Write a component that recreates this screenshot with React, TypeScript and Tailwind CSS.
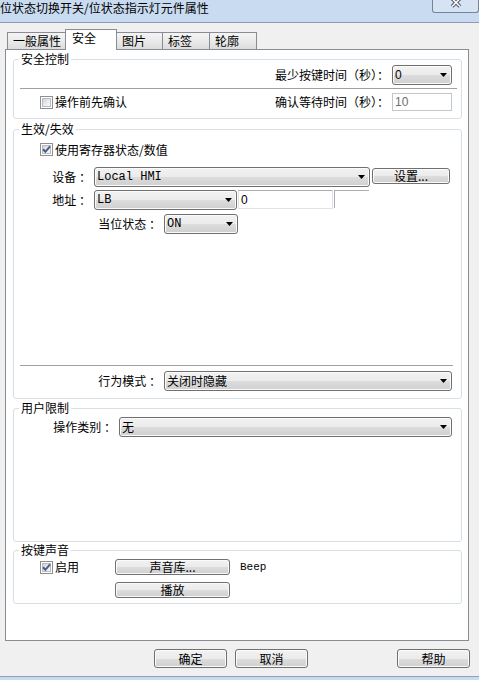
import React from "react";

const cjk = "[font-family:'Noto_Sans_CJK_SC','Noto_Sans',sans-serif]";
const mono = "[font-family:'Liberation_Mono',monospace]";
const sans = "[font-family:'Liberation_Sans',sans-serif]";
const btnBg =
  "[background-image:linear-gradient(180deg,#f2f2f2_0%,#ebebeb_50%,#dddddd_50%,#cfcfcf_100%)]";
const tabBg =
  "[background-image:linear-gradient(180deg,#f4f4f4_0%,#eaeaea_50%,#dcdcdc_100%)]";

function Btn({ children, className = "" }: { children: React.ReactNode; className?: string }) {
  return (
    <div
      className={`flex shrink-0 items-center justify-center rounded-[3px] border border-[#707070] ${btnBg} shadow-[inset_0_0_0_1px_#fbfbfb] leading-[14px] ${className}`}
    >
      {children}
    </div>
  );
}

function Combo({
  text,
  className = "",
  font = "",
}: {
  text: string;
  className?: string;
  font?: string;
}) {
  return (
    <div
      className={`flex h-[20px] shrink-0 items-center rounded-[3px] border border-[#707070] ${btnBg} shadow-[inset_0_0_0_1px_#fbfbfb] pl-[2px] pr-[4px] ${className}`}
    >
      <span className={`leading-[14px] ${font}`}>{text}</span>
      <svg className="ml-auto" width="7" height="4" viewBox="0 0 7 4">
        <path d="M0 0H7L3.5 4Z" fill="#000" />
      </svg>
    </div>
  );
}

function Check({ checked = false, className = "" }: { checked?: boolean; className?: string }) {
  return (
    <div
      className={`relative h-[13px] w-[13px] shrink-0 border border-[#8e8f8f] bg-white p-[1px] ${className}`}
    >
      <div className="h-full w-full border border-[#b9bcc0] [background-image:linear-gradient(135deg,#cfd2d6_0%,#eceef0_60%,#f7f7f7_100%)]" />
      {checked && (
        <svg className="absolute left-[-1px] top-[-1px]" width="13" height="13" viewBox="0 0 13 13">
          <path d="M3 6.3L5.4 8.8L10 3.4" fill="none" stroke="#4a5d8e" strokeWidth="2" />
        </svg>
      )}
    </div>
  );
}

function Tab({ children, className = "" }: { children: React.ReactNode; className?: string }) {
  return (
    <div
      className={`h-[17px] shrink-0 border border-b-0 border-[#898c95] ${tabBg} pl-[5px] leading-[16px] ${className}`}
    >
      {children}
    </div>
  );
}

export default function App() {
  return (
    <div
      className={`flex h-[680px] w-[479px] flex-col overflow-hidden bg-[#f0f0f0] text-[12px] leading-[16px] text-black ${cjk}`}
    >
      {/* title bar */}
      <div className="flex h-[23px] shrink-0 items-start border-b border-[#8c9db3] bg-[#c9dbf0]">
        <div className="leading-[15px]">位状态切换开关/位状态指示灯元件属性</div>
        <div className="ml-auto flex h-[13px] w-[47px] items-start justify-center overflow-hidden rounded-b-[3px] border border-t-0 border-[#74849b] bg-[#d6e3f3]">
          <svg className="-mt-[3px]" width="12" height="11" viewBox="0 0 12 11">
            <path d="M2 1.5L10 9.5M10 1.5L2 9.5" stroke="#4b5568" strokeWidth="3.6" />
            <path d="M2 1.5L10 9.5M10 1.5L2 9.5" stroke="#ffffff" strokeWidth="1.6" />
          </svg>
        </div>
      </div>

      {/* tabs */}
      <div className="mt-[6px] flex h-[20px] shrink-0 items-end pl-[7px]">
        <Tab className="w-[59px]">一般属性</Tab>
        <div className="relative z-10 -mb-[1px] -ml-[1px] h-[21px] w-[52px] shrink-0 border border-b-0 border-[#898c95] bg-white pl-[6px] leading-[16px]">
          安全
        </div>
        <Tab className="-ml-[1px] w-[47px]">图片</Tab>
        <Tab className="-ml-[1px] w-[48px]">标签</Tab>
        <Tab className="-ml-[1px] w-[48px]">轮廓</Tab>
      </div>

      {/* page */}
      <div className="ml-[5px] h-[592px] w-[464px] shrink-0 border border-[#898c95] bg-white">
        {/* 安全控制 */}
        <fieldset className="ml-[7px] mt-[3px] w-[449px] rounded-[3px] border border-[#d5dfe5] pb-[7px]">
          <legend className="ml-[5px] px-[2px] leading-[12px]">安全控制</legend>
          <div className="flex h-[20px] items-center justify-end pr-[9px]">
            <span className="whitespace-pre">最少按键时间（秒）：</span>
            <Combo className="ml-[3px] w-[60px]" text="0" font={sans} />
          </div>
          <div className="ml-[6px] mr-[4px] mt-[3px] h-px bg-[#a0a0a0]" />
          <div className="mt-[4px] flex h-[18px] items-center pr-[9px]">
            <Check className="ml-[26px]" />
            <span className="ml-[2px]">操作前先确认</span>
            <span className="ml-auto whitespace-pre">确认等待时间（秒）：</span>
            <div
              className={`ml-[3px] flex h-[18px] w-[60px] shrink-0 items-center border border-[#c3c6cb] bg-white pl-[2px] leading-[14px] text-[#6d6d6d] ${sans}`}
            >
              10
            </div>
          </div>
        </fieldset>

        {/* 生效/失效 */}
        <fieldset className="ml-[7px] mt-[4px] w-[449px] rounded-[3px] border border-[#d5dfe5] pb-[7px]">
          <legend className="ml-[5px] px-[2px] leading-[12px]">生效/失效</legend>
          <div className="mt-[8px] flex h-[13px] items-center">
            <Check checked className="ml-[26px]" />
            <span className="ml-[2px]">使用寄存器状态/数值</span>
          </div>
          <div className="mt-[11px] flex h-[20px] items-center">
            <div className="w-[77px] shrink-0 whitespace-pre text-right">设备 ：</div>
            <Combo className="ml-[3px] w-[276px]" text="Local HMI" font={mono} />
            <Btn className="ml-[2px] mt-[1px] h-[16px] w-[78px] self-start">设置...</Btn>
          </div>
          <div className="mt-[3px] flex h-[20px] items-center">
            <div className="w-[77px] shrink-0 whitespace-pre text-right">地址 ：</div>
            <Combo className="ml-[3px] w-[143px]" text="LB" font={mono} />
            <div
              className={`ml-[1px] flex h-[19px] w-[95px] shrink-0 items-center self-start border border-[#dfe2e8] border-t-[#abadb3] bg-white pl-[2px] leading-[14px] ${sans}`}
            >
              0
            </div>
            <div className="ml-[1px] h-[18px] w-[35px] shrink-0 self-start border-l border-t border-[#abadb3]" />
          </div>
          <div className="mt-[4px] flex h-[20px] items-center">
            <div className="w-[147px] shrink-0 whitespace-pre text-right">当位状态 ：</div>
            <Combo className="ml-[3px] w-[74px]" text="ON" font={mono} />
          </div>
          <div className="ml-[6px] mr-[8px] mt-[131px] h-px bg-[#a0a0a0]" />
          <div className="mt-[5px] flex h-[20px] items-center pr-[9px]">
            <div className="w-[147px] shrink-0 whitespace-pre text-right">行为模式 ：</div>
            <Combo className="ml-[3px] flex-1" text="关闭时隐藏" />
          </div>
        </fieldset>

        {/* 用户限制 */}
        <fieldset className="ml-[7px] mt-[3px] w-[449px] rounded-[3px] border border-[#d5dfe5] pb-[104px]">
          <legend className="ml-[5px] px-[2px] leading-[12px]">用户限制</legend>
          <div className="mt-[3px] flex h-[20px] items-center pr-[9px]">
            <div className="w-[102px] shrink-0 whitespace-pre text-right">操作类别 ：</div>
            <Combo className="ml-[3px] flex-1" text="无" />
          </div>
        </fieldset>

        {/* 按键声音 */}
        <fieldset className="ml-[7px] mt-[2px] w-[449px] rounded-[3px] border border-[#d5dfe5] pb-[5px]">
          <legend className="ml-[5px] px-[2px] leading-[12px]">按键声音</legend>
          <div className="mt-[3px] flex h-[16px] items-center">
            <div className="flex w-[101px] shrink-0 items-center">
              <Check checked className="ml-[26px]" />
              <span className="ml-[2px]">启用</span>
            </div>
            <Btn className="h-[16px] w-[115px]">声音库...</Btn>
            <span className={`ml-[10px] text-[11px] leading-[14px] ${mono}`}>Beep</span>
          </div>
          <div className="mt-[7px] flex h-[16px] items-center">
            <Btn className="ml-[101px] h-[16px] w-[115px]">播放</Btn>
          </div>
        </fieldset>
      </div>

      {/* bottom buttons */}
      <div className="mt-[8px] flex h-[19px] shrink-0 pl-[154px]">
        <Btn className="h-[19px] w-[73px]">确定</Btn>
        <Btn className="ml-[8px] h-[19px] w-[73px]">取消</Btn>
        <Btn className="ml-[89px] h-[19px] w-[73px]">帮助</Btn>
      </div>
      <div className="mt-auto h-[4px] shrink-0 border-t border-[#8fa0b5] bg-[#c9dbf0]" />
    </div>
  );
}
